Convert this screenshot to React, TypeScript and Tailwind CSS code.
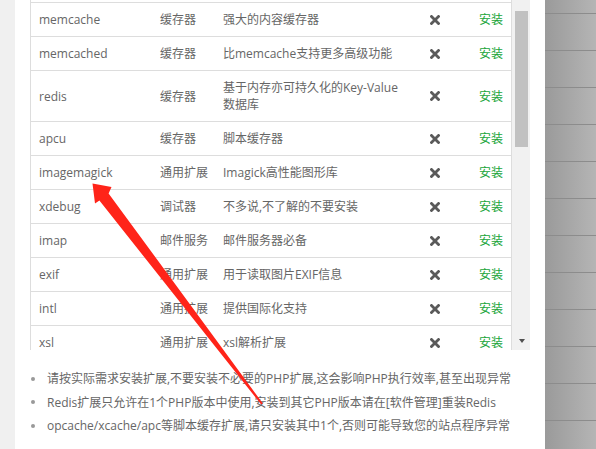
const ROWS = [
  { name: 'memcache', type: '缓存器', desc: '强大的内容缓存器' },
  { name: 'memcached', type: '缓存器', desc: '比memcache支持更多高级功能' },
  { name: 'redis', type: '缓存器', desc: '基于内存亦可持久化的Key-Value数据库' },
  { name: 'apcu', type: '缓存器', desc: '脚本缓存器' },
  { name: 'imagemagick', type: '通用扩展', desc: 'Imagick高性能图形库' },
  { name: 'xdebug', type: '调试器', desc: '不多说,不了解的不要安装' },
  { name: 'imap', type: '邮件服务', desc: '邮件服务器必备' },
  { name: 'exif', type: '通用扩展', desc: '用于读取图片EXIF信息' },
  { name: 'intl', type: '通用扩展', desc: '提供国际化支持' },
  { name: 'xsl', type: '通用扩展', desc: 'xsl解析扩展' },
]

const NOTES = [
  '请按实际需求安装扩展,不要安装不必要的PHP扩展,这会影响PHP执行效率,甚至出现异常',
  'Redis扩展只允许在1个PHP版本中使用,安装到其它PHP版本请在[软件管理]重装Redis',
  'opcache/xcache/apc等脚本缓存扩展,请只安装其中1个,否则可能导致您的站点程序异常',
]

function CrossIcon() {
  return (
    <svg width="10" height="10" viewBox="0 0 10 10" className="block">
      <path d="M1.5 1.5 L8.5 8.5 M8.5 1.5 L1.5 8.5" stroke="#5a5a5a" strokeWidth="2.8" strokeLinecap="square" />
    </svg>
  )
}

export default function App() {
  return (
    <div className="relative flex h-[449px] w-[596px] overflow-hidden font-['Open_Sans','Noto_Sans_CJK_SC',sans-serif] text-[12px] text-[#666]">
      <div className="w-[15px] shrink-0 bg-[#f0f0f0]" />

      <div className="w-[530px] shrink-0 bg-white">
        <div className="ml-[15px] flex h-[350px]">
          <div className="w-[482px] overflow-hidden border-x border-[#ddd]">
            <div className="h-[2px]" />
            {ROWS.map((r) => (
              <div key={r.name} className="flex items-center border-t border-[#ddd] py-2 leading-[17px]">
                <div className="w-[121px] shrink-0 pl-2">{r.name}</div>
                <div className="w-[63px] shrink-0 pl-2">{r.type}</div>
                <div className="w-[192px] shrink-0 pl-2 pr-[6px]">{r.desc}</div>
                <div className="flex w-[56px] shrink-0 justify-center">
                  <CrossIcon />
                </div>
                <div className="flex-1 pr-2 text-right text-[#20a53a]">安装</div>
              </div>
            ))}
          </div>
          <div className="flex w-[18px] shrink-0 flex-col bg-[#f1f1f1]">
            <div className="ml-[3px] mt-[11px] h-[136px] w-[13px] bg-[#c1c1c1]" />
            <div className="flex-1" />
            <div className="mb-[7px] ml-[7px] h-0 w-0 border-x-[3.5px] border-t-[4px] border-x-transparent border-t-[#505050]" />
          </div>
        </div>

        <ul className="pl-[16px] pt-[17px] leading-[23.5px] text-[#666]">
          {NOTES.map((n) => (
            <li key={n} className="flex items-center">
              <span className="mr-3 h-[4px] w-[4px] shrink-0 rounded-full bg-[#999]" />
              <span className="whitespace-nowrap">{n}</span>
            </li>
          ))}
        </ul>
      </div>

      <div className="flex flex-1 flex-col bg-gradient-to-r from-[#9a9a9a] to-[#b5b5b5]">
        <div className="h-[13px] shrink-0" />
        {Array.from({ length: 12 }).map((_, i) => (
          <div key={i} className="h-[37px] shrink-0 border-t border-[#8c8c8c]" />
        ))}
      </div>

      <svg className="pointer-events-none absolute left-0 top-0" width="596" height="449" viewBox="0 0 596 449">
        <polygon
          points="92.5,183.5 111.5,187 108.6,193.5 262.8,403.4 261.2,404.6 99.4,200.5 95,203.5"
          fill="#ff2419"
        />
      </svg>
    </div>
  )
}
